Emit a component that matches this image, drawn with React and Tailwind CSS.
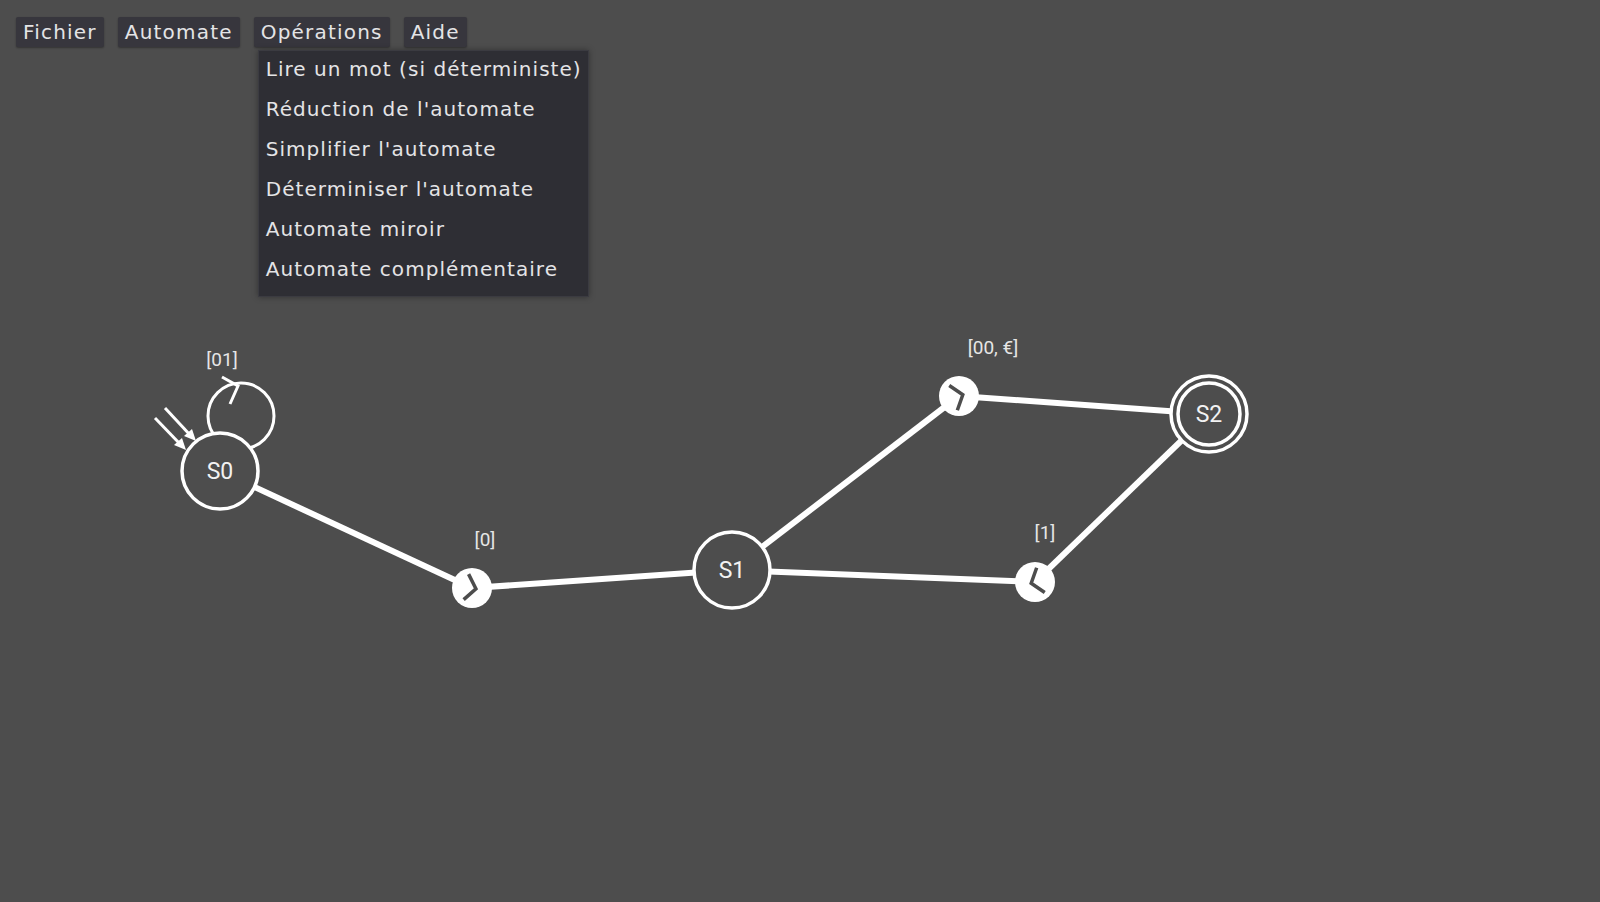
import React from 'react'

const MENUS = ['Fichier', 'Automate', 'Opérations', 'Aide']

const OPERATIONS = [
  'Lire un mot (si déterministe)',
  "Réduction de l'automate",
  "Simplifier l'automate",
  "Déterminiser l'automate",
  'Automate miroir',
  'Automate complémentaire',
]

const BG = '#4d4d4d'

const STATES = {
  S0: { x: 220, y: 471 },
  S1: { x: 732, y: 570 },
  S2: { x: 1209, y: 414 },
}

// transition handles sit on the edge between two states
const TRANSITIONS = [
  { from: 'S0', to: 'S1', x: 472, y: 588, label: '[0]', lx: 485, ly: 539 },
  { from: 'S1', to: 'S2', x: 959, y: 396, label: '[00, €]', lx: 993, ly: 347 },
  { from: 'S2', to: 'S1', x: 1035, y: 582, label: '[1]', lx: 1045, ly: 532 },
]

const Handle = ({ t }) => {
  const a = STATES[t.from]
  const b = STATES[t.to]
  const angle = (Math.atan2(b.y - a.y, b.x - a.x) * 180) / Math.PI
  return (
    <g>
      <circle cx={t.x} cy={t.y} r="20" fill="#ffffff" />
      <g transform={`translate(${t.x} ${t.y}) rotate(${angle})`}>
        <polyline points="-6,-13 4,0 -6,13" fill="none" stroke={BG} strokeWidth="3.5" />
      </g>
    </g>
  )
}

const Graph = () => {
  const edges = []
  TRANSITIONS.forEach((t, i) => {
    const a = STATES[t.from]
    const b = STATES[t.to]
    edges.push(<line key={`a${i}`} x1={a.x} y1={a.y} x2={t.x} y2={t.y} stroke="#fff" strokeWidth="6" />)
    edges.push(<line key={`b${i}`} x1={t.x} y1={t.y} x2={b.x} y2={b.y} stroke="#fff" strokeWidth="6" />)
  })

  return (
    <svg className="absolute inset-0" width="1600" height="902" viewBox="0 0 1600 902">
      {edges}

      {/* boucle sur S0 */}
      <circle cx="241" cy="416" r="33" fill="none" stroke="#fff" strokeWidth="3" />
      <polyline points="222,377 238,386 230,404" fill="none" stroke="#fff" strokeWidth="3" />

      {/* fleche d'etat initial */}
      <line x1="155" y1="418" x2="181" y2="445" stroke="#fff" strokeWidth="3" />
      <line x1="165" y1="408" x2="191" y2="436" stroke="#fff" strokeWidth="3" />
      <polygon points="186,450 174,445 182,438" fill="#fff" />
      <polygon points="196,441 184,436 192,429" fill="#fff" />

      {Object.entries(STATES).map(([name, s]) => (
        <g key={name}>
          <circle cx={s.x} cy={s.y} r="38" fill={BG} stroke="#fff" strokeWidth="3.5" />
          {name === 'S2' && <circle cx={s.x} cy={s.y} r="31" fill="none" stroke="#fff" strokeWidth="3.5" />}
          <text x={s.x} y={s.y + 8} textAnchor="middle" fill="#f2f2f2" fontSize="23" fontFamily="Roboto, sans-serif">
            {name}
          </text>
        </g>
      ))}

      {TRANSITIONS.map((t, i) => (
        <Handle key={i} t={t} />
      ))}

      <text x="222" y="366" textAnchor="middle" fill="#e6e6e6" fontSize="19" fontFamily="Roboto, sans-serif">[01]</text>
      {TRANSITIONS.map((t, i) => (
        <text key={i} x={t.lx} y={t.ly + 7} textAnchor="middle" fill="#e6e6e6" fontSize="19" fontFamily="Roboto, sans-serif">
          {t.label}
        </text>
      ))}
    </svg>
  )
}

export default function App() {
  return (
    <div className="relative w-full h-[902px] overflow-hidden bg-[#4d4d4d] font-['DejaVu_Sans',sans-serif] text-[#e4e4e6]">
      <Graph />

      {/* Menu bar */}
      <div className="relative z-10 flex gap-[14px] pl-4 pt-[17px]">
        {MENUS.map((m) => (
          <div key={m} className="relative">
            <div className="h-[30px] px-[7px] flex items-center bg-[#37363d] rounded-[2px] shadow-[0_1px_2px_rgba(0,0,0,0.35)] text-[20px] tracking-[1.2px]">
              {m}
            </div>
            {m === 'Opérations' && (
              <div className="absolute left-[4px] top-[33px] w-[331px] pb-[7px] bg-[#2e2e34] shadow-[0_0_6px_rgba(0,0,0,0.35)] border border-[#3b3b41]">
                {OPERATIONS.map((op) => (
                  <div key={op} className="h-10 first:-mt-[2px] flex items-center pl-[7px] text-[20px] tracking-[1.05px] whitespace-nowrap">
                    {op}
                  </div>
                ))}
              </div>
            )}
          </div>
        ))}
      </div>
    </div>
  )
}
